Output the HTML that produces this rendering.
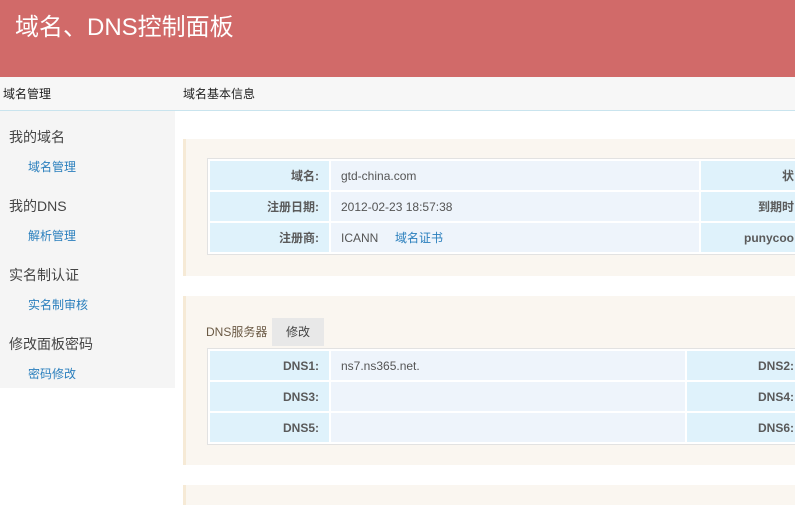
<!DOCTYPE html>
<html><head><meta charset="utf-8"><style>
*{margin:0;padding:0;box-sizing:border-box}
body{width:795px;height:492px;overflow:hidden;background:#fff;font-family:"Liberation Sans","Noto Sans CJK SC",sans-serif;position:relative;color:#555}
.hd{position:absolute;left:0;top:0;width:795px;height:77px;background:#d16a69;color:#fff;font-size:24px;padding:13px 0 0 15px;line-height:30px}
.nav{position:absolute;left:0;top:77px;width:795px;height:34px;background:#f7f7f7;border-bottom:1px solid #c9e4ee;font-size:12px;color:#222;line-height:34px}
.side{position:absolute;left:0;top:111px;width:175px;height:277px;background:#f5f5f5}
.side .g{position:absolute;left:9px;font-size:14px;color:#444}
.side .l{position:absolute;left:28px;font-size:12px;color:#2a7fbd}
.pn{position:absolute;left:183px;width:612px;background:#faf6f0;border-left:3px solid #f6ead6}
table{position:absolute;left:21px;border-collapse:separate;border-spacing:2px;border:1px solid #e2e2e2;background:#fff;font-size:12px}
td{height:29px;padding:0 10px}
td.k{background:#dff2fb;text-align:right;font-weight:bold;color:#5a5a5a}
td.v{background:#eef4fb;color:#555}
a{color:#2a7fbd;text-decoration:none}
</style></head><body>
<div class="hd">域名、DNS控制面板</div>
<div class="nav"><span style="position:absolute;left:3px">域名管理</span><span style="position:absolute;left:183px">域名基本信息</span></div>
<div class="side">
<div class="g" style="top:16px">我的域名</div><div class="l" style="top:47px">域名管理</div>
<div class="g" style="top:85px">我的DNS</div><div class="l" style="top:116px">解析管理</div>
<div class="g" style="top:154px">实名制认证</div><div class="l" style="top:185px">实名制审核</div>
<div class="g" style="top:223px">修改面板密码</div><div class="l" style="top:254px">密码修改</div>
</div>
<div class="pn" style="top:139px;height:137px">
<table style="top:19px;width:600px"><tr><td class="k" style="width:119px">域名:</td><td class="v" style="width:368px">gtd-china.com</td><td class="k">状</td></tr>
<tr><td class="k">注册日期:</td><td class="v">2012-02-23 18:57:38</td><td class="k">到期时</td></tr>
<tr><td class="k">注册商:</td><td class="v">ICANN &nbsp;&nbsp;&nbsp; <a>域名证书</a></td><td class="k">punycoo</td></tr></table>
</div>
<div class="pn" style="top:296px;height:169px">
<div style="position:absolute;left:20px;top:27px;font-size:12px;color:#6b5a45">DNS服务器</div>
<div style="position:absolute;left:86px;top:22px;width:52px;height:28px;background:#e8e8e8;font-size:12px;color:#444;text-align:center;line-height:28px">修改</div>
<table style="top:52px;width:600px"><tr><td class="k" style="width:119px">DNS1:</td><td class="v" style="width:354px">ns7.ns365.net.</td><td class="k">DNS2:</td></tr>
<tr><td class="k">DNS3:</td><td class="v"></td><td class="k">DNS4:</td></tr>
<tr><td class="k">DNS5:</td><td class="v"></td><td class="k">DNS6:</td></tr></table>
</div>
<div class="pn" style="top:485px;height:20px"></div>
</body></html>
